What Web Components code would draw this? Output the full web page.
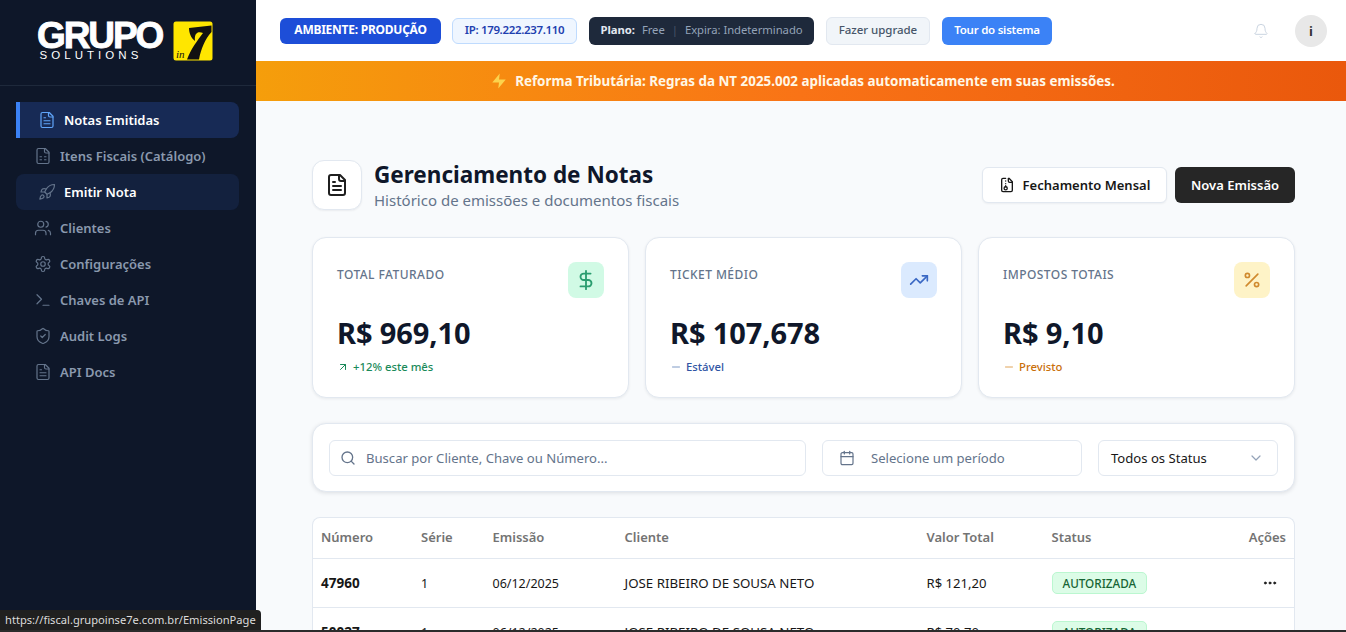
<!DOCTYPE html>
<html lang="pt-BR"><head><meta charset="utf-8"><title>Gerenciamento de Notas</title>
<style>
html,body{margin:0;padding:0;height:632px;overflow:hidden;background:#f8fafc;font-family:"Noto Sans","Open Sans",sans-serif;color:#0f172a}
</style></head><body>
<app-shell>
  <app-sidebar slot="side">
    <nav-item icon="doc" active>Notas Emitidas</nav-item>
    <nav-item icon="sheet">Itens Fiscais (Catálogo)</nav-item>
    <nav-item icon="rocket" current>Emitir Nota</nav-item>
    <nav-item icon="users">Clientes</nav-item>
    <nav-item icon="gear">Configurações</nav-item>
    <nav-item icon="term">Chaves de API</nav-item>
    <nav-item icon="shield">Audit Logs</nav-item>
    <nav-item icon="doc">API Docs</nav-item>
  </app-sidebar>
  <app-topbar slot="top"></app-topbar>
  <tax-banner slot="top"></tax-banner>
  <page-head></page-head>
  <stat-row>
    <stat-card label="TOTAL FATURADO" value="R$ 969,10" note="+12% este mês" tone="green" icon="dollar" trend="up"></stat-card>
    <stat-card label="TICKET MÉDIO" value="R$ 107,678" note="Estável" tone="blue" icon="trend" trend="flat"></stat-card>
    <stat-card label="IMPOSTOS TOTAIS" value="R$ 9,10" note="Previsto" tone="amber" icon="percent" trend="flat"></stat-card>
  </stat-row>
  <filter-bar></filter-bar>
  <notes-table>
    <note-row numero="47960" serie="1" emissao="06/12/2025" cliente="JOSE RIBEIRO DE SOUSA NETO" valor="R$ 121,20"></note-row>
    <note-row numero="50027" serie="1" emissao="06/12/2025" cliente="JOSE RIBEIRO DE SOUSA NETO" valor="R$ 70,70"></note-row>
  </notes-table>
  <status-tip slot="over">https://fiscal.grupoinse7e.com.br/EmissionPage</status-tip>
</app-shell>
<script>
const svg=(inner,size=18,sw=2,extra='')=>`<svg xmlns="http://www.w3.org/2000/svg" width="${size}" height="${size}" viewBox="0 0 24 24" fill="none" stroke="currentColor" stroke-width="${sw}" stroke-linecap="round" stroke-linejoin="round" ${extra}>${inner}</svg>`;
const ICONS={
 doc:'<path d="M15 2H6a2 2 0 0 0-2 2v16a2 2 0 0 0 2 2h12a2 2 0 0 0 2-2V7Z"/><path d="M14 2v4a2 2 0 0 0 2 2h4"/><path d="M10 9H8"/><path d="M16 13H8"/><path d="M16 17H8"/>',
 sheet:'<path d="M15 2H6a2 2 0 0 0-2 2v16a2 2 0 0 0 2 2h12a2 2 0 0 0 2-2V7Z"/><path d="M14 2v4a2 2 0 0 0 2 2h4"/><path d="M8 13h2"/><path d="M14 13h2"/><path d="M8 17h2"/><path d="M14 17h2"/>',
 rocket:'<path d="M4.5 16.5c-1.5 1.26-2 5-2 5s3.74-.5 5-2c.71-.84.7-2.13-.09-2.91a2.18 2.18 0 0 0-2.91-.09z"/><path d="m12 15-3-3a22 22 0 0 1 2-3.95A12.88 12.88 0 0 1 22 2c0 2.72-.78 7.5-6 11a22.35 22.35 0 0 1-4 2z"/><path d="M9 12H4s.55-3.03 2-4c1.62-1.08 5 0 5 0"/><path d="M12 15v5s3.03-.55 4-2c1.08-1.62 0-5 0-5"/>',
 users:'<path d="M16 21v-2a4 4 0 0 0-4-4H6a4 4 0 0 0-4 4v2"/><circle cx="9" cy="7" r="4"/><path d="M22 21v-2a4 4 0 0 0-3-3.87"/><path d="M16 3.13a4 4 0 0 1 0 7.75"/>',
 gear:'<path d="M12.22 2h-.44a2 2 0 0 0-2 2v.18a2 2 0 0 1-1 1.73l-.43.25a2 2 0 0 1-2 0l-.15-.08a2 2 0 0 0-2.73.73l-.22.38a2 2 0 0 0 .73 2.73l.15.1a2 2 0 0 1 1 1.72v.51a2 2 0 0 1-1 1.74l-.15.09a2 2 0 0 0-.73 2.73l.22.38a2 2 0 0 0 2.73.73l.15-.08a2 2 0 0 1 2 0l.43.25a2 2 0 0 1 1 1.73V20a2 2 0 0 0 2 2h.44a2 2 0 0 0 2-2v-.18a2 2 0 0 1 1-1.73l.43-.25a2 2 0 0 1 2 0l.15.08a2 2 0 0 0 2.73-.73l.22-.39a2 2 0 0 0-.73-2.73l-.15-.08a2 2 0 0 1-1-1.74v-.5a2 2 0 0 1 1-1.74l.15-.09a2 2 0 0 0 .73-2.73l-.22-.38a2 2 0 0 0-2.73-.73l-.15.08a2 2 0 0 1-2 0l-.43-.25a2 2 0 0 1-1-1.73V4a2 2 0 0 0-2-2z"/><circle cx="12" cy="12" r="3"/>',
 term:'<polyline points="4 17 10 11 4 5"/><line x1="12" y1="19" x2="20" y2="19"/>',
 shield:'<path d="M20 13c0 5-3.5 7.5-7.66 8.95a1 1 0 0 1-.67-.01C7.5 20.5 4 18 4 13V6a1 1 0 0 1 1-1c2 0 4.5-1.2 6.24-2.72a1.17 1.17 0 0 1 1.52 0C14.51 3.81 17 5 19 5a1 1 0 0 1 1 1z"/><path d="m9 12 2 2 4-4"/>',
 dollar:'<line x1="12" y1="2" x2="12" y2="22"/><path d="M17 5H9.5a3.5 3.5 0 0 0 0 7h5a3.5 3.5 0 0 1 0 7H6"/>',
 trend:'<polyline points="22 7 13.5 15.5 8.5 10.5 2 17"/><polyline points="16 7 22 7 22 13"/>',
 percent:'<line x1="19" y1="5" x2="5" y2="19"/><circle cx="6.5" cy="6.5" r="2.5"/><circle cx="17.5" cy="17.5" r="2.5"/>',
 up:'<path d="M7 7h10v10"/><path d="M7 17 17 7"/>',
 minus:'<path d="M5 12h14"/>',
 search:'<circle cx="11" cy="11" r="8"/><path d="m21 21-4.3-4.3"/>',
 cal:'<path d="M8 2v4"/><path d="M16 2v4"/><rect width="18" height="18" x="3" y="4" rx="2"/><path d="M3 10h18"/>',
 chev:'<path d="m6 9 6 6 6-6"/>',
 bell:'<path d="M10.27 21a2 2 0 0 0 3.46 0"/><path d="M3.26 15.33A1 1 0 0 0 4 17h16a1 1 0 0 0 .74-1.67C19.41 13.96 18 12.5 18 8A6 6 0 0 0 6 8c0 4.5-1.41 5.96-2.74 7.33"/>',
 zap:'<path d="M13 2 3 14h9l-1 8 10-12h-9l1-8z" fill="currentColor" stroke="none"/>',
 zipfile:'<path d="M10 2H6a2 2 0 0 0-2 2v16a2 2 0 0 0 2 2h12a2 2 0 0 0 2-2V7l-5-5"/><path d="M14 2v4a2 2 0 0 0 2 2h4"/><path d="M10 6h.01"/><path d="M10 10h.01"/><circle cx="10" cy="17" r="2.4"/><path d="M10 13v1.5"/>',
 dots:'<circle cx="5" cy="12" r="1.6" fill="currentColor"/><circle cx="12" cy="12" r="1.6" fill="currentColor"/><circle cx="19" cy="12" r="1.6" fill="currentColor"/>'
};
class Base extends HTMLElement{
  render(html){ if(!this.shadowRoot) this.attachShadow({mode:'open'}); this.shadowRoot.innerHTML=html; }
  a(n){return this.getAttribute(n)||''}
}
customElements.define('app-shell',class extends Base{connectedCallback(){this.render(`<style>
:host{display:block;position:relative;width:1346px;height:632px;overflow:hidden}
.frame{display:flex;height:630px;overflow:hidden}
.side{flex:0 0 256px;display:block}
.col{flex:1;min-width:0;display:flex;flex-direction:column;overflow:hidden}
.main{flex:1;padding:59px 51px 0 56px;display:flex;flex-direction:column;overflow:hidden}
.edge{height:2px;background:#2b2b2b}
.over{position:absolute;left:0;bottom:2px}
</style>
<div class="frame"><div class="side"><slot name="side"></slot></div>
<div class="col"><slot name="top"></slot><div class="main"><slot></slot></div></div></div>
<div class="edge"></div><div class="over"><slot name="over"></slot></div>`)}});
customElements.define('app-sidebar',class extends Base{connectedCallback(){this.render(`<style>
:host{display:block;height:630px;background:#0e1729;box-sizing:border-box}
.logo{height:86px;box-sizing:border-box;border-bottom:1px solid #1e293b;display:flex;align-items:flex-start;padding:21px 0 0 37px;gap:10px}
.word{width:126px;height:40px;font-family:"Liberation Sans",Arial,sans-serif;color:#fff}
.g{font-size:37px;font-weight:700;letter-spacing:-2.1px;line-height:30px;height:30px;-webkit-text-stroke:.9px #fff;white-space:nowrap}
.s{font-size:11.5px;letter-spacing:4.05px;line-height:10px;margin:-1px 0 0 2.5px;white-space:nowrap;font-weight:400}
.mark{width:40px;height:40px;flex:none;display:block}
.mark text{font-family:"Liberation Serif",serif;font-style:italic;font-size:11px;fill:#111}
nav{padding:16px 17px 0 16px;display:flex;flex-direction:column}
</style>
<div class="logo"><div class="word"><div class="g">GRUPO</div><div class="s">SOLUTIONS</div></div>
<svg class="mark" viewBox="0 0 40 40"><rect x="0.5" y="0.5" width="39" height="39" rx="2.5" fill="#ffe600"/>
<path d="M16 7 L38.5 4.5 L38.5 11 C32 18 28 28 26 38.5 L14 38.5 C18 28 24 20 30 12 C25 10 21 12 22 20 C18 17 16 12 16 7Z" fill="#111"/>
<text x="3" y="37">in</text></svg></div>
<nav><slot></slot></nav>`)}});
customElements.define('nav-item',class extends Base{connectedCallback(){const act=this.hasAttribute('active'),cur=this.hasAttribute('current');this.render(`<style>
:host{display:block;height:36px;box-sizing:border-box;border-radius:8px;font-size:13px;font-weight:600;color:#8a99ae}
.i{height:36px;box-sizing:border-box;display:flex;align-items:center;gap:8px;padding-left:18px;border-radius:8px;white-space:nowrap}
.act{background:#172a55;color:#fff;border-left:4px solid #3b82f6;border-radius:0 8px 8px 0}
.act svg{color:#60a5fa}
.cur{background:#13213e;color:#fff;border-left:4px solid transparent}
.cur svg{color:#64748b}
svg{color:#64748b;flex:none}
</style><div class="i ${act?'act':cur?'cur':''}">${svg(ICONS[this.a('icon')],18,1.6)}<span><slot></slot></span></div>`)}});
customElements.define('app-topbar',class extends Base{connectedCallback(){this.render(`<style>
:host{display:flex;align-items:center;height:61px;box-sizing:border-box;background:#fff;padding:0 19px 0 24px;font-size:12px;white-space:nowrap}
.c{display:flex;align-items:center;justify-content:center;box-sizing:border-box;border-radius:6px;letter-spacing:-.25px;padding-bottom:2px}
.amb{width:161px;height:26px;background:#1d4ed8;color:#fff;font-weight:700;margin-right:11px}
.ip{width:125px;height:26px;background:#eff6ff;border:1px solid #bfdbfe;color:#1e40af;font-weight:600;margin-right:12px;font-size:11.5px;letter-spacing:-.35px}
.pl{width:225px;height:28px;background:#1e293b;color:#94a3b8;margin-right:12px;letter-spacing:-.05px;font-size:11.3px}
.pl b{color:#e2e8f0;font-weight:700;margin-right:7px}
.pl i{font-style:normal;color:#475569;margin:0 7px}
.up{width:104px;height:28px;background:#f1f5f9;border:1px solid #e2e8f0;color:#475569;font-weight:500;margin-right:12px;letter-spacing:-.05px;font-size:11.5px}
.tour{width:110px;height:28px;background:#3b82f6;color:#fff;font-weight:600;font-size:11.5px}
.sp{flex:1}
.bell{color:#cbd5e1;display:flex;margin-right:26px}
.av{width:32px;height:32px;border-radius:50%;background:#e8e8e8;color:#333;font-weight:700;display:flex;align-items:center;justify-content:center;font-size:13px}
</style>
<div class="c amb">AMBIENTE: PRODUÇÃO</div><div class="c ip">IP: 179.222.237.110</div>
<div class="c pl"><b>Plano:</b>Free<i>|</i>Expira: Indeterminado</div>
<div class="c up">Fazer upgrade</div><div class="c tour">Tour do sistema</div><div class="sp"></div>
<div class="bell">${svg(ICONS.bell,16,1.5)}</div><div class="av">i</div>`)}});
customElements.define('tax-banner',class extends Base{connectedCallback(){this.render(`<style>
:host{display:flex;align-items:center;justify-content:center;gap:7px;height:40px;padding-left:3px;box-sizing:border-box;background:linear-gradient(90deg,#f59e0b 0%,#f97316 50%,#ea580c 100%);color:#fff7e6;font-size:13.4px;font-weight:700;white-space:nowrap}
svg{color:#fcd34d}
</style>${svg(ICONS.zap,18,2)}<span>Reforma Tributária: Regras da NT 2025.002 aplicadas automaticamente em suas emissões.</span>`)}});
customElements.define('page-head',class extends Base{connectedCallback(){this.render(`<style>
:host{display:flex;align-items:flex-start;height:50px;margin-bottom:27px;white-space:nowrap}
.box{width:50px;height:50px;box-sizing:border-box;border:1px solid #e2e8f0;border-radius:12px;background:#fff;box-shadow:0 1px 2px rgba(15,23,42,.06);display:flex;align-items:center;justify-content:center;color:#1f1f1f;margin-right:12px}
.t{display:flex;flex-direction:column}
h1{margin:0;font-size:22.5px;line-height:30px;font-weight:700;color:#0f172a}
p{margin:0;font-size:15px;line-height:20px;color:#64748b}
.sp{flex:1}
.btns{display:flex;align-self:center}
button{font:inherit;font-size:13px;font-weight:600;height:36px;border-radius:6px;display:flex;align-items:center;justify-content:center;gap:8px;box-sizing:border-box;cursor:pointer;white-space:nowrap}
.o{width:185px;background:#fff;border:1px solid #e2e8f0;color:#171717;margin-right:8px;box-shadow:0 1px 2px rgba(15,23,42,.05)}
.d{width:120px;background:#262626;border:0;color:#fff}
</style>
<div class="box">${svg(ICONS.doc,24,2)}</div><div class="t"><h1>Gerenciamento de Notas</h1><p>Histórico de emissões e documentos fiscais</p></div>
<div class="sp"></div><div class="btns"><button class="o">${svg(ICONS.zipfile,16,2)}Fechamento Mensal</button><button class="d">Nova Emissão</button></div>`)}});
customElements.define('stat-row',class extends Base{connectedCallback(){this.render(`<style>
:host{display:grid;grid-template-columns:repeat(3,1fr);gap:16px;margin-bottom:25px}
</style><slot></slot>`)}});
const TONES={green:['#d1fae5','#2a9d6f','#1a8a5a','#1a8a5a'],blue:['#dbeafe','#3a68c4','#2f55a4','#7f9ac5'],amber:['#fef3c7','#d08a2e','#c96f0a','#e0a458']};
customElements.define('stat-card',class extends Base{connectedCallback(){const t=TONES[this.a('tone')];const up=this.a('trend')==='up';this.render(`<style>
:host{display:block;height:161px;box-sizing:border-box;background:#fff;border:1px solid #e2e8f0;border-radius:14px;box-shadow:0 1px 3px rgba(15,23,42,.07);padding:24px}
.top{display:flex;justify-content:space-between;align-items:flex-start;height:36px}
.l{font-size:12px;line-height:16px;font-weight:500;letter-spacing:.45px;color:#64748b;margin-top:5px}
.ic{width:36px;height:36px;border-radius:8px;background:${t[0]};color:${t[1]};display:flex;align-items:center;justify-content:center}
.v{font-size:29px;line-height:38px;font-weight:700;color:#0f172a;margin-top:16px;letter-spacing:-.1px}
.n{display:flex;align-items:center;gap:4px;font-size:11.3px;line-height:16px;font-weight:500;color:${t[2]};margin-top:7px}
.n svg{color:${t[3]}}
</style>
<div class="top"><div class="l">${this.a('label')}</div><div class="ic">${svg(ICONS[this.a('icon')],this.a('icon')==='dollar'?22:20,2)}</div></div>
<div class="v">${this.a('value')}</div>
<div class="n">${svg(ICONS[up?'up':'minus'],12,2)}<span>${this.a('note')}</span></div>`)}});
customElements.define('filter-bar',class extends Base{connectedCallback(){this.render(`<style>
:host{display:flex;gap:16px;height:69px;box-sizing:border-box;background:#fff;border:1px solid #e2e8f0;border-radius:14px;box-shadow:0 1px 4px rgba(15,23,42,.12);padding:16px;margin-bottom:25px;font-size:13.1px;color:#64748b;white-space:nowrap}
.f{height:36px;box-sizing:border-box;border:1px solid #e2e8f0;border-radius:6px;display:flex;align-items:center;background:#fff}
.s{flex:0 0 477px;padding-left:10px;gap:10px}
.d{flex:0 0 260px;padding-left:16px;gap:16px}
.o{flex:0 0 180px;padding:0 13px 0 12px;justify-content:space-between;color:#171717}
svg{color:#64748b;flex:none}.o svg{color:#94a3b8}
</style>
<div class="f s">${svg(ICONS.search,16,2)}<span>Buscar por Cliente, Chave ou Número...</span></div>
<div class="f d">${svg(ICONS.cal,16,1.8)}<span>Selecione um período</span></div>
<div class="f o"><span>Todos os Status</span>${svg(ICONS.chev,16,1.8)}</div>`)}});
const GRID='grid-template-columns:100px 71.5px 132px 302px 125px 1fr 60px';
customElements.define('notes-table',class extends Base{connectedCallback(){this.render(`<style>
:host{display:block;background:#fff;border:1px solid #e2e8f0;border-bottom:0;border-radius:8px 8px 0 0;font-size:13px;box-sizing:border-box}
.h{display:grid;${GRID};height:41px;box-sizing:border-box;padding:0 8px 2px;align-items:center;border-bottom:1px solid #e2e8f0;color:#737373;font-weight:600;white-space:nowrap}
.r{text-align:right}
</style><div class="h"><span>Número</span><span>Série</span><span>Emissão</span><span>Cliente</span><span>Valor Total</span><span>Status</span><span class="r">Ações</span></div><slot></slot>`)}});
customElements.define('note-row',class extends Base{connectedCallback(){this.render(`<style>
:host{display:block}
.w{display:grid;${GRID};height:49px;box-sizing:border-box;align-items:center;border-bottom:1px solid #e2e8f0;padding:0 8px;color:#171717;white-space:nowrap;font-size:12.5px}
b{font-weight:700;font-size:13.5px}
.cl{font-size:13.3px}.vl{font-size:13.1px}
.st{display:inline-flex;align-items:center;height:22px;box-sizing:border-box;padding:0 10px;border:1px solid #bbf7d0;background:#dcfce7;color:#166534;border-radius:5px;font-size:11.7px;font-weight:500}
.a{display:flex;justify-content:flex-end;padding-right:8px}
</style><div class="w"><b>${this.a('numero')}</b><span>${this.a('serie')}</span><span>${this.a('emissao')}</span><span class="cl">${this.a('cliente')}</span><span class="vl">${this.a('valor')}</span><span><span class="st">AUTORIZADA</span></span><span class="a">${svg(ICONS.dots,16,1)}</span></div>`)}});
customElements.define('status-tip',class extends Base{connectedCallback(){this.render(`<style>
:host{display:block;height:20px;box-sizing:border-box;background:#202020;color:#dcdcdc;border-radius:0 4px 0 0;padding:0 5px;font:11.15px/20px "Noto Sans",sans-serif;white-space:nowrap}
</style><slot></slot>`)}});
</script>
</body></html>
